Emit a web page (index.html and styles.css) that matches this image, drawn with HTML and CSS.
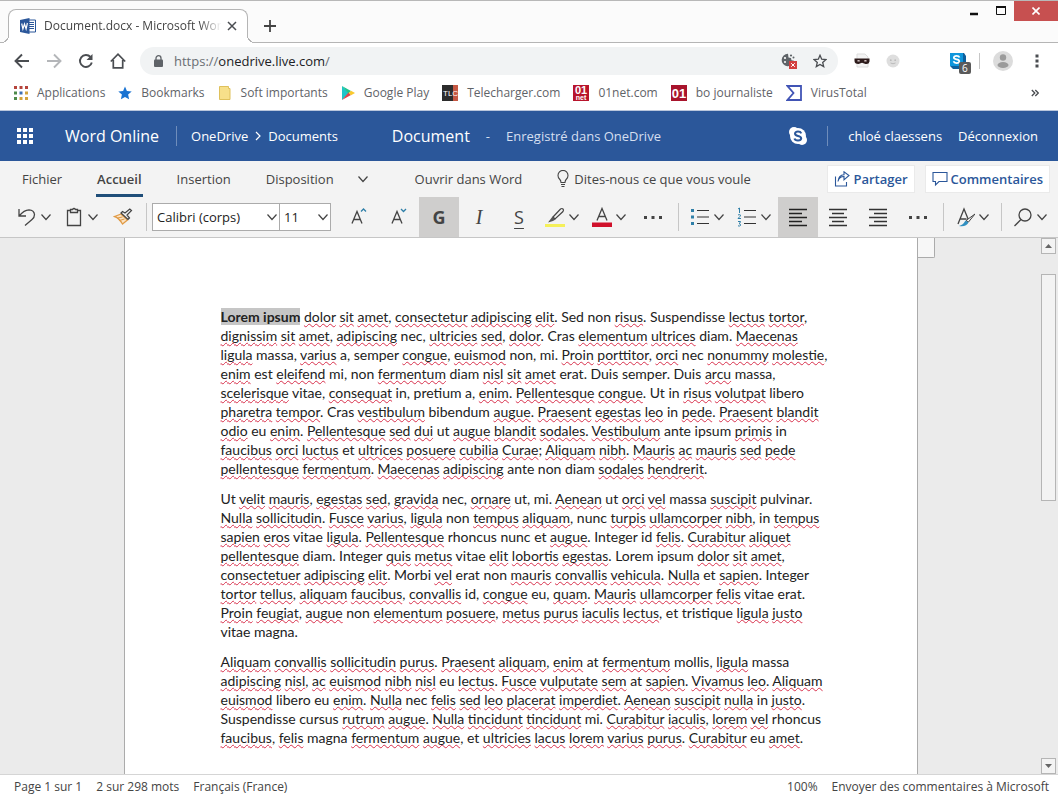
FILE: index.html
```html
<!DOCTYPE html>
<html lang="fr">
<head>
  <meta charset="UTF-8">
  <meta name="viewport" content="width=device-width, initial-scale=1.0">
  <title>Document.docx - Microsoft Word Online</title>
  <link rel="stylesheet" href="styles.css">
</head>
<body>

<svg class="defs" width="0" height="0" aria-hidden="true">
  <symbol id="chevron" viewBox="0 0 12 12"><path d="M1.500 3.500L6 8.500l4.500-5" fill="none" stroke="currentColor" stroke-width="1.200"/></symbol>
</svg>

<!-- Onglets du navigateur -->
<div class="tabstrip">
  <div class="browser-tab">
    <svg width="16" height="16" viewBox="0 0 16 16"><path d="M8 2h7.500v12H8z" fill="#fff" stroke="#2b579a"/><path d="M9 4.500h5M9 6.500h5M9 8.500h5M9 10.500h5" stroke="#2b579a"/><path d="M0 2l9.500-2v16L0 14z" fill="#2b579a"/><path d="M1.700 5.500l1.200 5.500 1.600-5 1.600 5 1.300-6" fill="none" stroke="#fff" stroke-width="1.200"/></svg>
    <span class="tab-title">Document.docx - Microsoft Word</span>
    <button class="icon-btn" aria-label="Fermer l'onglet"><svg width="10" height="10" viewBox="0 0 10 10"><path d="M1 1l8 8M9 1L1 9" stroke="#4a4d51" stroke-width="1.500"/></svg></button>
  </div>
  <button class="icon-btn new-tab" aria-label="Nouvel onglet"><svg width="14" height="14" viewBox="0 0 14 14"><path d="M7 1v12M1 7h12" stroke="#444" stroke-width="1.800"/></svg></button>
  <div class="window-buttons">
    <button class="icon-btn" aria-label="Réduire"><svg width="10" height="10" viewBox="0 0 10 10"><path d="M1 8h8" stroke="#111" stroke-width="2.500"/></svg></button>
    <button class="icon-btn" aria-label="Agrandir"><svg width="10" height="10" viewBox="0 0 10 10"><path d="M0 1h10" stroke="#111" stroke-width="2"/><path d="M.5 1v7.500h9V1" fill="none" stroke="#111"/></svg></button>
    <button class="icon-btn close" aria-label="Fermer"><svg width="8" height="8" viewBox="0 0 8 8"><path d="M.5.5l7 7M7.500.5l-7 7" stroke="#fff" stroke-width="1.600"/></svg></button>
  </div>
</div>

<!-- Barre d'adresse -->
<div class="addressbar">
  <button class="icon-btn" aria-label="Précédent"><svg width="16" height="16" viewBox="0 0 16 16"><path d="M15 8H2M8 1.500L1.500 8 8 14.500" fill="none" stroke="#4a4d51" stroke-width="1.900"/></svg></button>
  <button class="icon-btn" aria-label="Suivant"><svg width="16" height="16" viewBox="0 0 16 16"><path d="M1 8h13M8 1.500L14.500 8 8 14.500" fill="none" stroke="#b4b6b9" stroke-width="1.900"/></svg></button>
  <button class="icon-btn" aria-label="Actualiser"><svg width="16" height="16" viewBox="0 0 16 16"><path d="M13.800 9.500A6 6 0 1 1 12.500 4" fill="none" stroke="#4a4d51" stroke-width="1.900"/><path d="M14.500 1v6h-6z" fill="#4a4d51"/></svg></button>
  <button class="icon-btn" aria-label="Accueil"><svg width="16" height="16" viewBox="0 0 16 16"><path d="M.8 8.500L8 1.200l7.200 7.300M3.300 7v7.800h9.400V7" fill="none" stroke="#4a4d51" stroke-width="1.700"/></svg></button>
  <div class="omnibox">
    <svg width="9" height="12" viewBox="0 0 9 12"><rect y="4.500" width="9" height="7.500" rx="1" fill="#5f6368"/><path d="M2 5V3.200a2.500 2.500 0 0 1 5 0V5" fill="none" stroke="#5f6368" stroke-width="1.300"/></svg>
    <span class="url">https://<b>onedrive.live.com</b>/</span>
    <button class="icon-btn" aria-label="Cookies bloqués"><svg width="16" height="16" viewBox="0 0 16 16"><path d="M7 .800a6.200 6.200 0 1 0 6 7l-2.500-.5-.5-2.300-2.500-.500z" fill="#5f6368"/><circle cx="4" cy="5" r="1.100" fill="#fff"/><circle cx="4" cy="9" r="1" fill="#fff"/><circle cx="10" cy="2.500" r="1.100" fill="#5f6368"/><circle cx="12.500" cy="4.500" r="1" fill="#5f6368"/><rect x="8" y="8" width="8" height="8" fill="#d23f3f"/><path d="M10.200 10.200l3.600 3.600M13.800 10.200l-3.600 3.600" stroke="#fff"/></svg></button>
    <button class="icon-btn" aria-label="Ajouter aux favoris"><svg width="14" height="14" viewBox="0 0 14 14"><path d="M7 1.300l1.700 3.900 4.200.400-3.200 2.800 1 4.200L7 10.400l-3.700 2.200 1-4.200L1.100 5.600l4.200-.400z" fill="none" stroke="#4a4d51" stroke-width="1.300"/></svg></button>
  </div>
  <div class="extensions">
    <button class="icon-btn" aria-label="Navigation masquée"><svg width="16" height="16" viewBox="0 0 16 16"><path d="M3 1h8l3 3v10H3z" fill="#f4f4f4" stroke="#ddd"/><path d="M.5 5.500h15v3q-.5 3-4 2.500L8 9.800 4.500 11Q.5 11 .5 8z" fill="#2d1b1b"/><path d="M3 8q1.500-1.800 3.200 0-1.600 1.200-3.200 0M9.800 8q1.700-1.800 3.200 0-1.600 1.200-3.200 0" fill="#d9c9c9"/></svg></button>
    <button class="icon-btn" aria-label="Extension inactive"><svg width="14" height="14" viewBox="0 0 14 14"><circle cx="7" cy="7" r="6.500" fill="#dedede"/><circle cx="4.800" cy="6.200" r=".900" fill="#bbb"/><circle cx="9.200" cy="6.200" r=".900" fill="#bbb"/><path d="M4.500 9q2.500 1.500 5 0" fill="none" stroke="#bbb"/></svg></button>
    <button class="icon-btn skype-ext" aria-label="Skype, 6 notifications"><svg width="16" height="16" viewBox="0 0 16 16"><path d="M0 0h14l2 3v13H3l-3-3z" fill="#0f5f9c"/><path d="M0 0h13v13H0z" fill="#0f96dc"/><path d="M9.500 4.500Q9 2.800 6.500 2.800T3.800 4.600q0 1.400 2.700 1.700t2.800 1.900-2.800 1.900Q4 10 3.500 8.300" fill="none" stroke="#fff" stroke-width="1.700"/></svg><span class="badge">6</span></button>
    <span class="rule"></span>
    <button class="icon-btn" aria-label="Profil"><svg width="20" height="20" viewBox="0 0 20 20"><circle cx="10" cy="10" r="10" fill="#dcdcdc"/><circle cx="10" cy="6.500" r="3.200" fill="#9b9b9b"/><ellipse cx="10" cy="14" rx="5.500" ry="3" fill="#9b9b9b"/></svg></button>
    <button class="icon-btn menu" aria-label="Menu"><svg width="4" height="14" viewBox="0 0 4 14"><path d="M.5.5h3v3h-3zM.5 5.500h3v3h-3zM.5 10.500h3v3h-3z" fill="#4a4d51"/></svg></button>
  </div>
</div>

<!-- Favoris -->
<nav class="bookmarks">
  <a href="#"><svg width="14" height="14" viewBox="0 0 14 14"><path d="M0 0h3v3H0zM5.500 0h3v3h-3zM11 0h3v3h-3z" fill="#b5443c"/><path d="M0 5.500h3v3H0z" fill="#4d8a4a"/><path d="M5.500 5.500h3v3h-3z" fill="#3d6fb5"/><path d="M11 5.500h3v3h-3zM5.500 11h3v3h-3zM11 11h3v3h-3z" fill="#d2a33c"/><path d="M0 11h3v3H0z" fill="#4d8a4a"/></svg>Applications</a>
  <a href="#"><svg width="14" height="14" viewBox="0 0 14 14"><path d="M7 .5l1.900 4.400 4.800.500-3.600 3.200 1 4.700L7 10.900l-4.100 2.400 1-4.700L.3 5.400l4.800-.500z" fill="#1a73d2"/></svg>Bookmarks</a>
  <a href="#"><svg width="14" height="14" viewBox="0 0 14 14"><path d="M1.500.5h9v2h1.500v11H1.500z" fill="#f7e08a" stroke="#dfc15c"/></svg>Soft importants</a>
  <a href="#"><svg width="14" height="14" viewBox="0 0 14 14"><path d="M1 0l7 7-7 7z" fill="#1fc5c9"/><path d="M1 0l9 5-2.500 2.500z" fill="#22c38b"/><path d="M1 14l9-5-2.500-2.500z" fill="#e2434b"/><path d="M10 4.800L14 7l-4 2.200L7.700 7z" fill="#f9c92e"/></svg>Google Play</a>
  <a href="#"><svg width="16" height="16" viewBox="0 0 16 16"><path d="M0 0h16v16H0z" fill="#2c2c2c"/><path d="M11 0h5v16h-5z" fill="#c65843"/><text x="1" y="11" font-size="8" font-family="Liberation Sans" fill="#fff">TLC</text></svg>Telecharger.com</a>
  <a href="#"><svg width="16" height="16" viewBox="0 0 16 16"><path d="M0 0h16v16H0z" fill="#b8142c"/><text x="8" y="9" font-size="11" font-weight="bold" text-anchor="middle" font-family="Liberation Sans" fill="#fff">01</text><text x="8" y="15" font-size="7" font-weight="bold" text-anchor="middle" font-family="Liberation Sans" fill="#fff">net</text></svg>01net.com</a>
  <a href="#"><svg width="16" height="16" viewBox="0 0 16 16"><path d="M0 0h16v16H0z" fill="#a8142c"/><text x="8" y="13" font-size="13" font-weight="bold" text-anchor="middle" font-family="Liberation Sans" fill="#fff">01</text></svg>bo journaliste</a>
  <a href="#"><svg width="16" height="16" viewBox="0 0 16 16"><path d="M1.500 1h13.500v14H1.500l6-7z" fill="none" stroke="#4154b5" stroke-width="1.800"/></svg>VirusTotal</a>
  <button class="icon-btn more-bookmarks" aria-label="Autres favoris"><svg width="8" height="8" viewBox="0 0 8 8"><path d="M.8 1l3 3-3 3M4.300 1l3 3-3 3" fill="none" stroke="#4a4d51" stroke-width="1.300"/></svg></button>
</nav>

<!-- En-tête Word Online -->
<header class="app-header">
  <button class="icon-btn" aria-label="Lanceur d'applications"><svg width="16" height="16" viewBox="0 0 16 16"><path d="M0 0h4v4H0zM6 0h4v4H6zM12 0h4v4h-4zM0 6h4v4H0zM6 6h4v4H6zM12 6h4v4h-4zM0 12h4v4H0zM6 12h4v4H6zM12 12h4v4h-4z" fill="#fff"/></svg></button>
  <span class="app-name">Word Online</span>
  <span class="rule"></span>
  <nav class="crumbs">
    <a href="#">OneDrive</a>
    <svg width="6" height="10" viewBox="0 0 6 10"><path d="M1 1l4 4-4 4" fill="none" stroke="#fff" stroke-width="1.200"/></svg>
    <a href="#">Documents</a>
  </nav>
  <span class="doc-name">Document</span>
  <span class="save-state"><span>-</span><span>Enregistré dans OneDrive</span></span>
  <div class="account">
    <button class="icon-btn" aria-label="Skype"><svg width="18" height="18" viewBox="0 0 18 18"><circle cx="9" cy="9" r="8" fill="#fff"/><circle cx="5" cy="5" r="5" fill="#fff"/><circle cx="13" cy="13" r="5" fill="#fff"/><path d="M12.300 6.300Q11.500 4.500 9 4.500T6 6.600Q6 8.400 9 9t3.200 2.400Q12 13.500 9 13.500t-3.500-2" fill="none" stroke="#2b579a" stroke-width="2"/></svg></button>
    <span class="rule"></span>
    <span class="user">
      <span>chloé claessens</span>
      <a href="#">Déconnexion</a>
    </span>
  </div>
</header>

<!-- Onglets du ruban -->
<div class="ribbon-tabs">
  <button class="ribbon-tab">Fichier</button>
  <button class="ribbon-tab active">Accueil</button>
  <button class="ribbon-tab">Insertion</button>
  <div class="more-tabs">
    <button class="ribbon-tab">Disposition</button>
    <button class="icon-btn" aria-label="Autres onglets"><svg width="12" height="12"><use href="#chevron"/></svg></button>
  </div>
  <button class="ribbon-tab open-word">Ouvrir dans Word</button>
  <label class="tell-me">
    <svg width="14" height="18" viewBox="0 0 14 18"><path d="M5 12.500q0-2-1.500-3.500a5 5 0 1 1 7 0Q9 10.500 9 12.500zM5 14.500h4M5.500 16.500h3" fill="none" stroke="#444" stroke-width="1.100"/></svg>
    <input type="text" placeholder="Dites-nous ce que vous voule" aria-label="Dites-nous ce que vous voulez faire">
  </label>
  <div class="ribbon-actions">
    <button class="action"><svg width="16" height="16" viewBox="0 0 16 16"><path d="M1.500 5.500v9.500h11v-4M4 10.500q1-5 6-5V8.800L15 4.500 10 .800v2.900q-5.500.300-6 6.800z" fill="none" stroke="#2b579a" stroke-width="1.100"/></svg>Partager</button>
    <button class="action"><svg width="16" height="16" viewBox="0 0 16 16"><path d="M1 1.500h14v9H7l-3.500 3.500v-3.500H1z" fill="none" stroke="#2b579a" stroke-width="1.100"/></svg>Commentaires</button>
  </div>
</div>

<!-- Barre d'outils -->
<div class="toolbar">
  <div class="tools">
    <button class="tool split" aria-label="Annuler"><svg width="20" height="20" viewBox="0 0 20 20"><path d="M2 2v7h7M2.500 8.500Q7 3 12 2.800q5 .200 5.500 4.700 0 3-2.500 5L8 18.500" fill="none" stroke="#444" stroke-width="1.300"/></svg><svg width="12" height="12"><use href="#chevron"/></svg></button>
    <button class="tool split" aria-label="Coller"><svg width="20" height="20" viewBox="0 0 20 20"><path d="M6.500 3.500H3.500v15h13v-15h-3M6.500 2.500h2q1.500-2 3 0h2v3h-7z" fill="none" stroke="#444" stroke-width="1.300"/></svg><svg width="12" height="12"><use href="#chevron"/></svg></button>
    <button class="tool narrow" aria-label="Reproduire la mise en forme"><svg width="20" height="20" viewBox="0 0 20 20"><path d="M8 7L1.500 9.500q4 1 8 7.500l5-4z" fill="#fbe3c4" stroke="#e09a45" stroke-width="1.300"/><path d="M4.500 11l5-1M6.500 13.500l5-1.500" stroke="#e09a45"/><path d="M8 6l7 6.500 1.500-1.500-2.500-3 4.500-4.500-1.700-1.500L12 6 9.500 4.500z" fill="#f3f3f3" stroke="#444" stroke-width="1.200"/></svg></button>
  </div>
  <span class="rule"></span>
  <div class="fonts">
    <div class="combo font-name"><select aria-label="Police"><option>Calibri (corps)</option></select><svg width="12" height="12"><use href="#chevron"/></svg></div>
    <div class="combo font-size"><select aria-label="Taille de police"><option>11</option></select><svg width="12" height="12"><use href="#chevron"/></svg></div>
  </div>
  <div class="tools">
    <button class="tool" aria-label="Augmenter la taille"><svg width="20" height="20" viewBox="0 0 20 20"><path d="M3 16.500L8 4.500l5 12M5 12.500h6" fill="none" stroke="#444" stroke-width="1.300"/><path d="M12 4.500L14.500 2 17 4.500" fill="none" stroke="#2f7fa8" stroke-width="1.300"/></svg></button>
    <button class="tool" aria-label="Réduire la taille"><svg width="20" height="20" viewBox="0 0 20 20"><path d="M3 16.500L8 4.500l5 12M5 12.500h6" fill="none" stroke="#444" stroke-width="1.300"/><path d="M12 2l2.500 2.500L17 2" fill="none" stroke="#2f7fa8" stroke-width="1.300"/></svg></button>
    <button class="tool pressed bold">G</button>
    <button class="tool italic">I</button>
    <button class="tool underline">S</button>
    <button class="tool split" aria-label="Surlignage"><svg width="20" height="20" viewBox="0 0 20 20"><path d="M0 17h20v3H0z" fill="#f5f05a"/><path d="M8 10l7.500-8q1.500-1 2.500 0t0 2.500l-8 7.500z" fill="none" stroke="#444" stroke-width="1.200"/><path d="M7.500 9.500l3 3-2.500 1.500-5 1.500z" fill="#555"/></svg><svg width="12" height="12"><use href="#chevron"/></svg></button>
    <button class="tool split" aria-label="Couleur de police"><svg width="20" height="20" viewBox="0 0 20 20"><path d="M0 15.500h20V20H0z" fill="#d0112b"/><path d="M5 13.500L10 1.500l5 12M6.800 9.500h6.400" fill="none" stroke="#444" stroke-width="1.300"/></svg><svg width="12" height="12"><use href="#chevron"/></svg></button>
    <button class="tool" aria-label="Plus d'options de police"><svg width="20" height="20" viewBox="0 0 20 20"><path d="M1 9h3v3H1zM8.500 9h3v3h-3zM16 9h3v3h-3z" fill="#444"/></svg></button>
  </div>
  <span class="rule"></span>
  <div class="tools">
    <button class="tool split" aria-label="Puces"><svg width="20" height="20" viewBox="0 0 20 20"><path d="M1 2h3v3H1zM1 8.500h3v3H1zM1 15h3v3H1z" fill="#2f7fa8"/><path d="M7 3.500h12M7 10h12M7 16.500h12" stroke="#333" stroke-width="1.200"/></svg><svg width="12" height="12"><use href="#chevron"/></svg></button>
    <button class="tool split" aria-label="Numérotation"><svg width="20" height="20" viewBox="0 0 20 20"><path d="M1 2l1.500-1v5M1 8q1.500-1 2.500 0 .3 1-2.500 3.500h3M1 14.500h2.500q0 1.500-1.500 2 2 .5 1.500 2-1 1-2.500.3" fill="none" stroke="#2f7fa8"/><path d="M7 3.500h12M7 10h12M7 16.500h12" stroke="#333" stroke-width="1.200"/></svg><svg width="12" height="12"><use href="#chevron"/></svg></button>
    <button class="tool pressed" aria-label="Aligner à gauche"><svg width="20" height="20" viewBox="0 0 20 20"><path d="M1 2.500h18M1 6.500h13M1 10.500h18M1 14.500h13M1 18.500h18" stroke="#222" stroke-width="1.300"/></svg></button>
    <button class="tool" aria-label="Centrer"><svg width="20" height="20" viewBox="0 0 20 20"><path d="M1 2.500h18M4 6.500h12M1 10.500h18M4 14.500h12M1 18.500h18" stroke="#333" stroke-width="1.300"/></svg></button>
    <button class="tool" aria-label="Aligner à droite"><svg width="20" height="20" viewBox="0 0 20 20"><path d="M1 2.500h18M6 6.500h13M1 10.500h18M6 14.500h13M1 18.500h18" stroke="#333" stroke-width="1.300"/></svg></button>
    <button class="tool" aria-label="Plus d'options de paragraphe"><svg width="20" height="20" viewBox="0 0 20 20"><path d="M1 9h3v3H1zM8.500 9h3v3h-3zM16 9h3v3h-3z" fill="#444"/></svg></button>
  </div>
  <span class="rule"></span>
  <div class="tools">
    <button class="tool split" aria-label="Styles"><svg width="20" height="20" viewBox="0 0 20 20"><path d="M3 17L9 2l4.500 11M5 12h6.500" fill="none" stroke="#444" stroke-width="1.300"/><path d="M20 7l-6.500 8-2.500-1.500z" fill="#f3f3f3" stroke="#444"/><path d="M10.500 13.500l3 2q-2 4.500-9.500 3.500 4-1 6.500-5.500z" fill="#2f8fc0"/></svg><svg width="12" height="12"><use href="#chevron"/></svg></button>
  </div>
  <span class="rule"></span>
  <div class="tools">
    <button class="tool split" aria-label="Rechercher"><svg width="20" height="20" viewBox="0 0 20 20"><circle cx="12" cy="8" r="6" fill="none" stroke="#444" stroke-width="1.300"/><path d="M8 12.500L1.500 19" stroke="#444" stroke-width="1.300"/></svg><svg width="12" height="12"><use href="#chevron"/></svg></button>
  </div>
</div>

<!-- Document -->
<main class="workspace">
  <div class="canvas">
    <article class="page" lang="la">
      <div class="page-tab"></div>
      <p><mark>Lorem ipsum</mark> <u>dolor</u> <u>sit</u> <u>amet</u>, <u>consectetur</u> <u>adipiscing</u> <u>elit</u>. Sed non <u>risus</u>. Suspendisse <u>lectus</u> <u>tortor</u>,<br>
        <u>dignissim</u> <u>sit</u> <u>amet</u>, <u>adipiscing</u> nec, <u>ultricies</u> <u>sed</u>, <u>dolor</u>. Cras <u>elementum</u> <u>ultrices</u> diam. <u>Maecenas</u><br>
        <u>ligula</u> massa, <u>varius</u> a, semper <u>congue</u>, <u>euismod</u> non, mi. <u>Proin</u> <u>porttitor</u>, <u>orci</u> nec <u>nonummy</u> <u>molestie</u>,<br>
        <u>enim</u> est <u>eleifend</u> mi, non <u>fermentum</u> diam <u>nisl</u> <u>sit</u> <u>amet</u> erat. Duis semper. Duis <u>arcu</u> massa,<br>
        <u>scelerisque</u> vitae, <u>consequat</u> in, pretium a, <u>enim</u>. <u>Pellentesque</u> <u>congue</u>. Ut in <u>risus</u> <u>volutpat</u> libero<br>
        <u>pharetra</u> <u>tempor</u>. Cras <u>vestibulum</u> bibendum <u>augue</u>. <u>Praesent</u> <u>egestas</u> <u>leo</u> in <u>pede</u>. <u>Praesent</u> <u>blandit</u><br>
        <u>odio</u> eu <u>enim</u>. <u>Pellentesque</u> <u>sed</u> <u>dui</u> ut <u>augue</u> <u>blandit</u> <u>sodales</u>. <u>Vestibulum</u> ante ipsum <u>primis</u> in<br>
        <u>faucibus</u> <u>orci</u> <u>luctus</u> et <u>ultrices</u> <u>posuere</u> <u>cubilia</u> <u>Curae</u>; <u>Aliquam</u> <u>nibh</u>. <u>Mauris</u> <u>ac</u> <u>mauris</u> <u>sed</u> <u>pede</u><br>
        <u>pellentesque</u> <u>fermentum</u>. <u>Maecenas</u> <u>adipiscing</u> ante non diam <u>sodales</u> <u>hendrerit</u>.</p>
      <p>Ut <u>velit</u> <u>mauris</u>, <u>egestas</u> <u>sed</u>, <u>gravida</u> nec, <u>ornare</u> ut, mi. <u>Aenean</u> ut <u>orci</u> <u>vel</u> massa <u>suscipit</u> pulvinar.<br>
        <u>Nulla</u> <u>sollicitudin</u>. <u>Fusce</u> <u>varius</u>, <u>ligula</u> non <u>tempus</u> <u>aliquam</u>, nunc <u>turpis</u> <u>ullamcorper</u> <u>nibh</u>, in <u>tempus</u><br>
        <u>sapien</u> <u>eros</u> vitae <u>ligula</u>. <u>Pellentesque</u> rhoncus nunc et <u>augue</u>. Integer id <u>felis</u>. <u>Curabitur</u> <u>aliquet</u><br>
        <u>pellentesque</u> diam. Integer <u>quis</u> <u>metus</u> vitae <u>elit</u> <u>lobortis</u> <u>egestas</u>. Lorem ipsum <u>dolor</u> <u>sit</u> <u>amet</u>,<br>
        <u>consectetuer</u> <u>adipiscing</u> <u>elit</u>. Morbi <u>vel</u> erat non <u>mauris</u> <u>convallis</u> <u>vehicula</u>. <u>Nulla</u> et <u>sapien</u>. Integer<br>
        <u>tortor</u> <u>tellus</u>, <u>aliquam</u> <u>faucibus</u>, <u>convallis</u> id, <u>congue</u> eu, <u>quam</u>. <u>Mauris</u> <u>ullamcorper</u> <u>felis</u> vitae erat.<br>
        <u>Proin</u> <u>feugiat</u>, <u>augue</u> non <u>elementum</u> <u>posuere</u>, <u>metus</u> <u>purus</u> <u>iaculis</u> <u>lectus</u>, et tristique <u>ligula</u> <u>justo</u><br>
        vitae magna.</p>
      <p><u>Aliquam</u> <u>convallis</u> <u>sollicitudin</u> <u>purus</u>. <u>Praesent</u> <u>aliquam</u>, <u>enim</u> at <u>fermentum</u> mollis, <u>ligula</u> massa<br>
        <u>adipiscing</u> <u>nisl</u>, <u>ac</u> <u>euismod</u> <u>nibh</u> <u>nisl</u> eu <u>lectus</u>. <u>Fusce</u> <u>vulputate</u> <u>sem</u> at <u>sapien</u>. <u>Vivamus</u> <u>leo</u>. <u>Aliquam</u><br>
        <u>euismod</u> libero eu <u>enim</u>. <u>Nulla</u> nec <u>felis</u> <u>sed</u> <u>leo</u> <u>placerat</u> <u>imperdiet</u>. <u>Aenean</u> <u>suscipit</u> <u>nulla</u> in <u>justo</u>.<br>
        Suspendisse cursus <u>rutrum</u> <u>augue</u>. <u>Nulla</u> <u>tincidunt</u> <u>tincidunt</u> mi. <u>Curabitur</u> <u>iaculis</u>, <u>lorem</u> <u>vel</u> rhoncus<br>
        <u>faucibus</u>, <u>felis</u> magna <u>fermentum</u> <u>augue</u>, et <u>ultricies</u> <u>lacus</u> <u>lorem</u> <u>varius</u> <u>purus</u>. <u>Curabitur</u> eu <u>amet</u>.</p>
    </article>
  </div>
  <div class="scrollbar">
    <button class="scroll-btn" aria-label="Défiler vers le haut"><svg width="7" height="4" viewBox="0 0 7 4"><path d="M0 4l3.500-4L7 4z" fill="#666"/></svg></button>
    <div class="track"><div class="thumb"></div></div>
    <button class="scroll-btn" aria-label="Défiler vers le bas"><svg width="7" height="4" viewBox="0 0 7 4"><path d="M0 0h7L3.500 4z" fill="#666"/></svg></button>
  </div>
</main>

<footer class="statusbar">
  <span>Page 1 sur 1</span>
  <span>2 sur 298 mots</span>
  <span>Français (France)</span>
  <span class="zoom">100%</span>
  <a href="#">Envoyer des commentaires à Microsoft</a>
</footer>

</body>
</html>
```

FILE: styles.css
```css
* {
  box-sizing: border-box;
}
body {
  margin: 0;
  height: 100vh;
  display: flex;
  flex-direction: column;
  overflow: hidden;
  font-family: "Open Sans", "Noto Sans", sans-serif;
  font-size: 12px;
  color: #444;
  background: #fff;
}
button, input, select {
  font: inherit;
  color: inherit;
}
a {
  color: inherit;
  text-decoration: none;
}
svg {
  flex: none;
  display: block;
}
.defs {
  position: absolute;
}
.icon-btn {
  display: flex;
  align-items: center;
  justify-content: center;
  border: 0;
  padding: 0;
  background: none;
}
.rule {
  width: 1px;
  background: #c6c6c6;
}

/* navigateur */
.tabstrip {
  display: flex;
  align-items: flex-end;
  height: 43px;
  padding-left: 8px;
  background: #fbfbfb;
  border-top: 1px solid #b8b8b8;
  border-bottom: 1px solid #b5b5b5;
}
.browser-tab {
  position: relative;
  display: flex;
  align-items: center;
  gap: 8px;
  width: 240px;
  height: 34px;
  margin-bottom: -1px;
  padding: 0 10px 2px 11px;
  background: #fff;
  border: 1px solid #b5b5b5;
  border-bottom: 0;
  border-radius: 8px 8px 0 0;
}
.browser-tab::before,
.browser-tab::after {
  content: "";
  position: absolute;
  bottom: 0;
  width: 8px;
  height: 8px;
}
.browser-tab::before {
  left: -8px;
  background: radial-gradient(circle at 0 0, #fbfbfb 7px, #b5b5b5 7px 8px, #fff 8px);
}
.browser-tab::after {
  right: -8px;
  background: radial-gradient(circle at 100% 0, #fbfbfb 7px, #b5b5b5 7px 8px, #fff 8px);
}
.tab-title {
  flex: 1;
  min-width: 0;
  margin-right: -8px;
  white-space: nowrap;
  -webkit-mask-image: linear-gradient(90deg, #000 85%, transparent 97%);
  mask-image: linear-gradient(90deg, #000 85%, transparent 97%);
}
.new-tab {
  height: 32px;
  margin-left: 15px;
}
.window-buttons {
  display: flex;
  align-self: flex-start;
  margin-left: auto;
}
.window-buttons .icon-btn {
  width: 27px;
  height: 20px;
}
.window-buttons .close {
  width: 44px;
  background: #c75050;
}
.addressbar {
  display: flex;
  align-items: center;
  gap: 16px;
  height: 36px;
  padding: 0 13px 0 14px;
}
.omnibox {
  flex: 1;
  display: flex;
  align-items: center;
  gap: 16px;
  height: 28px;
  margin-left: -2px;
  padding: 0 11px 0 14px;
  border-radius: 14px;
  background: #f1f3f4;
}
.url {
  flex: 1;
  margin-left: -5px;
  font-size: 13px;
  color: #6a6e73;
}
.url b {
  font-weight: normal;
  color: #202124;
}
.extensions {
  display: flex;
  align-items: center;
  gap: 16px;
}
.extensions .rule {
  height: 16px;
  margin: 0 -3px;
}
.extensions .menu {
  width: 16px;
}
.skype-ext {
  position: relative;
  margin-left: 34px;
}
.badge {
  position: absolute;
  left: 9px;
  top: 9px;
  padding: 0 3px;
  border-radius: 2px;
  background: #5a5a5a;
  color: #fff;
  font-size: 10px;
  line-height: 12px;
}
.bookmarks {
  display: flex;
  align-items: center;
  gap: 13px;
  height: 32px;
  padding: 0 19px 4px 14px;
  border-bottom: 1px solid #b9c6dc;
  color: #5f6368;
}
.bookmarks a {
  display: flex;
  align-items: center;
  gap: 9px;
  white-space: nowrap;
}
.more-bookmarks {
  margin-left: auto;
}

/* en-tête */
.app-header {
  display: flex;
  align-items: center;
  height: 50px;
  padding: 0 20px 0 17px;
  background: #2b579a;
  color: #fff;
  font-size: 13px;
  white-space: nowrap;
}
.app-header .rule {
  height: 20px;
  background: #6f8dbb;
}
.app-name {
  margin: 0 17px 0 32px;
  font-size: 16px;
}
.crumbs {
  display: flex;
  align-items: center;
  gap: 7px;
  margin: 0 54px 0 14px;
}
.doc-name {
  font-size: 16px;
}
.save-state {
  display: flex;
  gap: 16px;
  margin-left: 16px;
  color: #d5dff0;
}
.account {
  display: flex;
  align-items: center;
  gap: 20px;
  margin-left: auto;
}
.user {
  display: flex;
  gap: 16px;
}

/* ruban */
.ribbon-tabs {
  display: flex;
  align-items: center;
  gap: 33px;
  height: 36px;
  padding: 0 8px 0 21px;
  background: #f3f3f3;
  font-size: 13px;
}
.ribbon-tab {
  height: 36px;
  padding: 3px 1px 0;
  border: 0;
  border-bottom: 3px solid transparent;
  background: none;
  white-space: nowrap;
}
.ribbon-tab.active {
  border-color: #1f4e79;
  font-weight: 600;
}
.more-tabs {
  display: flex;
  align-items: center;
  gap: 22px;
}
.open-word {
  margin-left: 12px;
}
.tell-me {
  display: flex;
  align-items: center;
  gap: 4px;
}
.tell-me input {
  width: 190px;
  padding: 0;
  border: 0;
  background: none;
}
.tell-me input::placeholder {
  color: #444;
}
.ribbon-actions {
  display: flex;
  gap: 10px;
  margin-left: auto;
}
.action {
  display: flex;
  align-items: center;
  gap: 3px;
  height: 28px;
  padding: 0 6px;
  border: 1px solid #eaeaea;
  background: #fff;
  color: #2b579a;
  font-weight: 600;
}
.toolbar {
  display: flex;
  align-items: center;
  gap: 5px;
  height: 41px;
  padding: 0 0 0 11px;
  background: #f3f3f3;
  border-bottom: 1px solid #c6c6c6;
}
.toolbar .rule {
  height: 28px;
}
.tools, .fonts {
  display: flex;
  align-items: center;
}
.fonts {
  margin-right: 3px;
}
.tool {
  display: flex;
  align-items: center;
  justify-content: center;
  width: 40px;
  height: 40px;
  padding: 0;
  border: 0;
  background: none;
  font-size: 18px;
}
.tool.split {
  gap: 3px;
  width: 47px;
}
.tool.narrow {
  width: 36px;
}
.tool.pressed {
  background: #cfcecd;
}
.bold {
  font-weight: bold;
}
.italic {
  font-family: "Liberation Serif", serif;
  font-size: 20px;
  font-style: italic;
}
.underline {
  text-decoration: underline 1px;
  text-underline-offset: 4px;
}
.combo {
  position: relative;
}
.combo select {
  display: block;
  width: 100%;
  height: 28px;
  padding: 0 4px;
  border: 1px solid #ababab;
  border-radius: 0;
  background: #fff;
  color: #222;
  font-size: 13px;
  appearance: none;
}
.combo svg {
  position: absolute;
  right: 2px;
  top: 8px;
  pointer-events: none;
}
.font-name {
  width: 128px;
}
.font-size {
  width: 52px;
  margin-left: -1px;
}

/* document */
.workspace {
  flex: 1;
  min-height: 0;
  display: flex;
  background: #ebebeb;
}
.canvas {
  flex: 1;
  overflow: hidden;
}
.page {
  position: relative;
  width: 794px;
  min-height: 100%;
  margin: 0 auto;
  padding: 69px 0 30px 96px;
  background: #fff;
  border: solid #ababab;
  border-width: 0 1px;
  font-family: Lato, sans-serif;
  font-size: 14px;
  line-height: 19px;
  color: #222;
}
.page-tab {
  position: absolute;
  left: 100%;
  top: 0;
  width: 18px;
  height: 20px;
  background: #f7f7f7;
  border: 1px solid #ababab;
  border-top: 0;
  border-radius: 0 0 2px 0;
}
.page p {
  margin: 0 0 11px;
  white-space: nowrap;
}
.page mark {
  background: #c6c6c6;
  color: inherit;
  font-weight: bold;
}
/* soulignement ondulé des fautes */
.page u {
  text-decoration: underline wavy 1px #d8304c;
  text-decoration-skip-ink: none;
  text-underline-offset: 1px;
}
.scrollbar {
  display: flex;
  flex-direction: column;
  width: 17px;
  padding-right: 2px;
}
.scroll-btn {
  display: flex;
  align-items: center;
  justify-content: center;
  height: 16px;
  padding: 0;
  border: 1px solid #b5b5b5;
  background: #f3f3f3;
}
.track {
  flex: 1;
  padding-top: 20px;
}
.thumb {
  height: 47%;
  border: 1px solid #b5b5b5;
  background: #f3f3f3;
}
.statusbar {
  display: flex;
  align-items: center;
  gap: 14px;
  height: 23px;
  padding: 0 9px 0 14px;
  border-top: 1px solid #d5d5d5;
}
.zoom {
  margin-left: auto;
}
```
